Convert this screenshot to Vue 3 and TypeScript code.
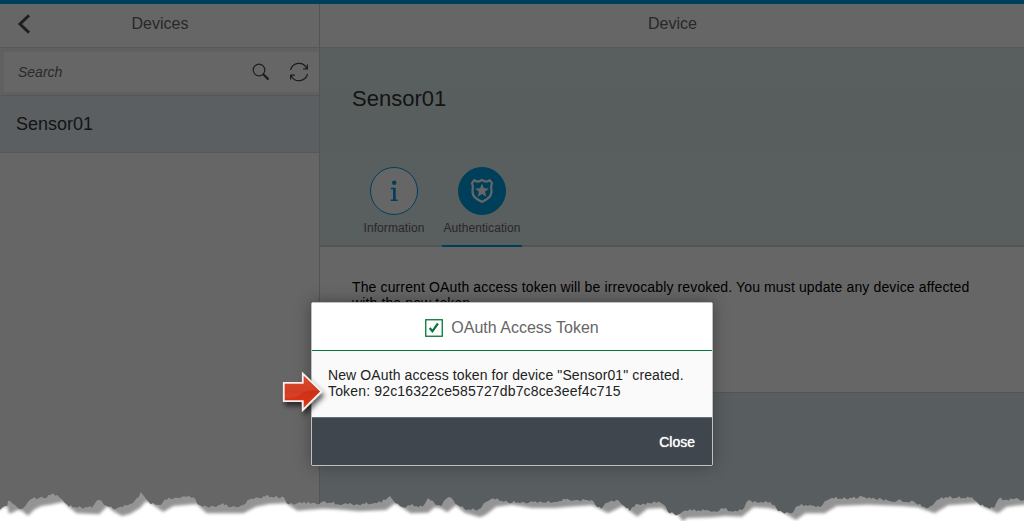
<script setup lang="ts">
type Point = [number, number]

const parse = (text: string, shift: number): Point[] =>
  text.trim().split(/\s+/).map((pair) => {
    const [x, y] = pair.split(',').map(Number)
    return [x + shift, y] as Point
  })

// Torn paper edge, in thirds of a pixel, split in four strips of 768 units.
const shadowStrips = [
  '0,113 8,106 17,101 22,102 24,86 32,88 34,92 40,96 46,100 54,109 70,109 84,90 96,80 110,82 124,74 132,79 146,69 172,69 186,82 194,92 202,98 206,104 276,107 290,86 304,86 320,102 340,112 362,104 386,98 404,86 416,76 422,60 438,80 446,90 466,98 482,99 494,82 524,77 546,74 580,76 592,96 608,104 640,103 656,99 680,97 684,104 700,102 716,106 736,96 750,82',
  '0,76 10,78 22,73 84,76 92,94 118,97 126,92 150,95 170,92 190,96 206,88 220,92 250,98 270,94 300,97 350,95 376,92 402,72 418,94 440,106 456,100 500,104 516,78 530,86 540,100 556,102 564,86 576,76 590,82 606,100 626,112 668,112 690,90 706,80',
  '0,92 30,90 50,92 70,88 96,92 130,90 166,80 176,86 190,84 206,88 220,84 238,84 250,98 268,110 282,92 300,86 320,86 330,98 354,118 372,96 400,98 426,88 446,92 460,102 468,120 498,128 514,118 540,116 586,114 600,120 612,120 628,108 656,118 690,114 710,84 740,92',
  '0,92 20,100 30,118 70,124 88,102 126,98 156,106 170,88 186,80 270,78 284,74 310,80 340,80 360,86 376,90 396,82 410,90 430,86 450,98 480,108 500,92 520,76 560,78 612,76 630,94 650,104 678,108 692,80 710,84 740,80 768,84',
]
const paperStrips = [
  '0,113 8,106 22,102 26,124 38,122 50,115 60,114 70,120 84,131 104,112 124,102 150,98 190,90 206,104 230,124 298,127 322,102 340,118 366,132 390,126 420,108 438,88 450,92 490,120 520,102 590,96 620,124 730,124',
  '0,104 40,96 90,94 124,116 200,110 240,112 310,118 390,114 418,94 440,108 464,124 516,122 536,106 552,108 574,121 600,100 626,122 672,136 690,128 720,104',
  '0,98 60,108 130,108 170,104 240,100 262,110 288,124 332,102 354,118 376,134 406,110 450,108 470,122 498,128 512,148 526,138 600,136 640,132 690,134 724,106',
  '0,108 28,114 50,124 84,144 112,124 170,124 206,102 300,98 400,102 450,106 500,124 540,100 630,94 640,102 690,124 716,104 768,98',
]

const toPath = (points: Point[]): string =>
  'M-30,180 L-30,113 ' + points.map(([x, y]) => `L${x.toFixed(1)},${y.toFixed(1)}`).join(' ') + ' L3110,98 V180 Z'

// Adds the small notches of a ripped edge between the traced points.
const roughen = (points: Point[]): Point[] => {
  const out: Point[] = []
  const notches = [0, 3, -3, 1, 4, -2, 0, -5, 2]
  points.forEach(([x, y], i) => {
    out.push([x, y])
    const next = points[i + 1]
    if (!next) return
    const steps = Math.floor((next[0] - x) / 6)
    for (let s = 1; s < steps; s++) {
      const t = s / steps
      out.push([x + (next[0] - x) * t, y + (next[1] - y) * t + notches[(i * 2 + s) % notches.length]])
    }
  })
  return out
}

const shadowPath = toPath(roughen(shadowStrips.flatMap((s, i) => parse(s, i * 768))))
const paperPath = toPath(paperStrips.flatMap((s, i) => parse(s, i * 768)))
</script>

<template>
  <div class="screen">
    <div class="app">
      <aside class="master">
        <header class="bar">
          <svg class="back" width="14" height="20" viewBox="0 0 14 20"><path d="M12 1.300 3 10l9 8.700" fill="none" stroke="#505050" stroke-width="3" /></svg>
          <span>Devices</span>
        </header>
        <div class="search-bar">
          <div class="search">
            <span class="placeholder">Search</span>
            <svg class="magnifier" width="18" height="18" viewBox="0 0 18 18" fill="none" stroke="#4a4a4a">
              <circle cx="7" cy="7" r="5.800" stroke-width="1.200" />
              <path d="m11 11 5.500 5.500" stroke-width="2.400" />
            </svg>
            <svg class="refresh" width="20" height="20" viewBox="0 0 20 20" fill="none" stroke="#4a4a4a" stroke-width="1.200">
              <path d="M1.500 8C3.500.200 14 -1.300 17.800 6.300M18.400 2.500v4.300h-4.300M18.500 12C16.500 19.800 6 21.300 2.200 13.700M1.600 17.500v-4.300h4.300" />
            </svg>
          </div>
        </div>
        <div class="item">Sensor01</div>
      </aside>
      <main class="detail">
        <header class="bar">Device</header>
        <section class="object">
          <h1>Sensor01</h1>
          <nav class="tabs">
            <div class="tab">
              <div class="circle">
                <svg width="12" height="22" viewBox="0 0 12 22" fill="#009de0"><circle cx="6.200" cy="2.800" r="2.200" /><path d="M2.800 7.700H7.700v11.800h2V21H2.800v-1.500h2.300V9.200H2.800z" /></svg>
              </div>
              <span>Information</span>
            </div>
            <div class="tab selected">
              <div class="circle">
                <svg width="24" height="26" viewBox="0 0 24 26">
                  <path d="M4.300 2.200 7 3.500C9 3.700 10.500 3 12 1.800 13.500 3 15 3.700 17 3.500l2.700-1.300 2.300 3c-1.500 2.500-.7 5-.5 7.800.3 6-4.500 8.300-9.500 10.800C7 21.300 2.200 19 2.500 13c.2-2.800 1-5.300-.5-7.800z" fill="none" stroke="#fff" stroke-width="2.200" stroke-linejoin="round" />
                  <path d="m12 5.500 1.900 4.700 5 .4-3.900 3.200 1.300 4.900-4.300-2.700-4.300 2.700L9 13.800l-3.900-3.200 5-.4z" fill="#fff" />
                </svg>
              </div>
              <span>Authentication</span>
            </div>
          </nav>
        </section>
        <section class="text">The current OAuth access token will be irrevocably revoked. You must update any device affected<br />with the new token.</section>
        <section class="rest"></section>
      </main>
    </div>
    <div class="overlay">
      <div class="dialog">
        <header class="dialog-head">
          <svg width="18" height="18" viewBox="0 0 18 18" fill="none" stroke="#007833"><rect x=".75" y=".75" width="16.500" height="16.500" stroke-width="1.300" /><path d="m4.700 9 2.700 3.300 5.500-7.800" stroke-width="2.200" /></svg>
          <span>OAuth Access Token</span>
        </header>
        <div class="dialog-body">New OAuth access token for device "Sensor01" created.<br /><span class="token">Token: 92c16322ce585727db7c8ce3eef4c715</span></div>
        <footer class="dialog-foot"><span>Close</span></footer>
      </div>
    </div>
    <svg class="arrow" width="56" height="56" viewBox="0 0 56 56">
      <defs>
        <linearGradient id="red" x1="0" y1="0" x2="0" y2="1"><stop offset="0" stop-color="#d63e24" /><stop offset=".5" stop-color="#cf2f14" /><stop offset="1" stop-color="#df3517" /></linearGradient>
        <filter id="drop" x="-30%" y="-30%" width="180%" height="180%"><feDropShadow dx="2" dy="4" stdDeviation="2.500" flood-color="#000" flood-opacity=".6" /></filter>
      </defs>
      <path d="M4.800 12.800h19V3.500L42.500 21.500 23.800 40v-8.800h-19z" fill="url(#red)" stroke="#f4efee" stroke-width="1.800" filter="url(#drop)" />
      <path d="M6 14h19V7l14 14q-11-2-17 3T6 28z" fill="#fff" opacity=".07" />
    </svg>
    <svg class="torn" width="1024" height="50" viewBox="0 0 3072 150">
      <defs>
        <clipPath id="ripped"><path :d="shadowPath" /></clipPath>
        <filter id="soft" x="-2%" y="-30%" width="104%" height="160%"><feGaussianBlur stdDeviation="5" /></filter>
      </defs>
      <path :d="shadowPath" fill="#949494" />
      <g clip-path="url(#ripped)"><path :d="paperPath" fill="#fff" filter="url(#soft)" /></g>
      <rect y="147" width="3072" height="3" fill="#fff" />
    </svg>
  </div>
</template>

<style>
body { margin: 0; overflow: hidden; }
</style>

<style scoped>
* { box-sizing: border-box; }
.screen { position: relative; width: 1024px; height: 522px; overflow: hidden; font-family: "Liberation Sans", Arial, sans-serif; background: #fff; }
.app { display: flex; height: 522px; border-top: 4px solid #009de0; }
.master { width: 320px; border-right: 1px solid #d2d2d2; background: #fff; }
.detail { flex: 1; display: flex; flex-direction: column; }
.bar { position: relative; height: 44px; display: flex; align-items: center; justify-content: center; padding: 0 0 4px 1px; border-bottom: 1px solid #dcdcdc; color: #666; font-size: 16px; background: #fff; }
.back { position: absolute; left: 17px; top: 10px; }
.search-bar { height: 48px; padding: 4px 0 3px 4px; background: #f0f0f0; border-bottom: 1px solid #d8d8d8; }
.search { height: 40px; display: flex; align-items: center; padding: 0 10px 0 14px; background: #fff; }
.placeholder { flex: 1; color: #6a6a6a; font-size: 14px; font-style: italic; }
.magnifier { margin-right: 19px; }
.item { height: 57px; padding-left: 16px; display: flex; align-items: center; background: #e4eef4; border-bottom: 1px solid #d8dcdf; font-size: 18px; color: #333; }
.object { height: 199px; padding: 38px 32px 0; background: linear-gradient(180deg, #dcedea, #dfebed); border-bottom: 2px solid #ccd2d4; }
h1 { margin: 0; font-size: 22px; line-height: 26px; font-weight: 400; color: #333; }
.tabs { display: flex; gap: 8px; margin-top: 55px; padding-left: 2px; }
.tab { width: 80px; height: 80px; display: flex; flex-direction: column; align-items: center; font-size: 12px; line-height: 14px; letter-spacing: .08px; color: #666; border-bottom: 2px solid transparent; }
.circle { width: 48px; height: 48px; margin-bottom: 6px; border: 1px solid #009de0; border-radius: 50%; background: #fff; display: flex; align-items: center; justify-content: center; }
.selected { border-bottom-color: #009de0; }
.selected .circle { background: #009de0; }
.text { height: 146px; padding: 32px 32px 0; border-bottom: 1px solid #d0d5d7; background: #fff; color: #000; font-size: 14px; line-height: 16px; letter-spacing: .128px; white-space: nowrap; }
.rest { flex: 1; background: #dceaf0; }
.overlay { position: absolute; inset: 0; background: rgba(0, 0, 0, .6); display: flex; align-items: flex-start; justify-content: center; padding-top: 302px; }
.dialog { width: 402px; height: 164px; border: 1px solid #c0c0c0; border-radius: 2px; background: #fafafa; box-shadow: 0 0 16px rgba(0, 0, 0, .35); }
.dialog-head { height: 48px; display: flex; align-items: center; justify-content: center; gap: 8px; padding-top: 2px; background: #fff; border-bottom: 1px solid #007833; color: #666; font-size: 16px; }
.dialog-body { height: 66px; padding: 16px 16px 0; font-size: 14px; line-height: 16px; letter-spacing: .108px; color: #222; white-space: nowrap; }
.token { letter-spacing: .158px; }
.dialog-foot { height: 48px; background: #3f464d; border-top: 1px solid #687078; display: flex; align-items: center; justify-content: flex-end; padding-right: 17px; color: #fff; font-size: 14px; text-shadow: 0 0 1px #fff; }
.arrow { position: absolute; left: 279px; top: 370px; }
.torn { position: absolute; left: 0; top: 472px; }
</style>
